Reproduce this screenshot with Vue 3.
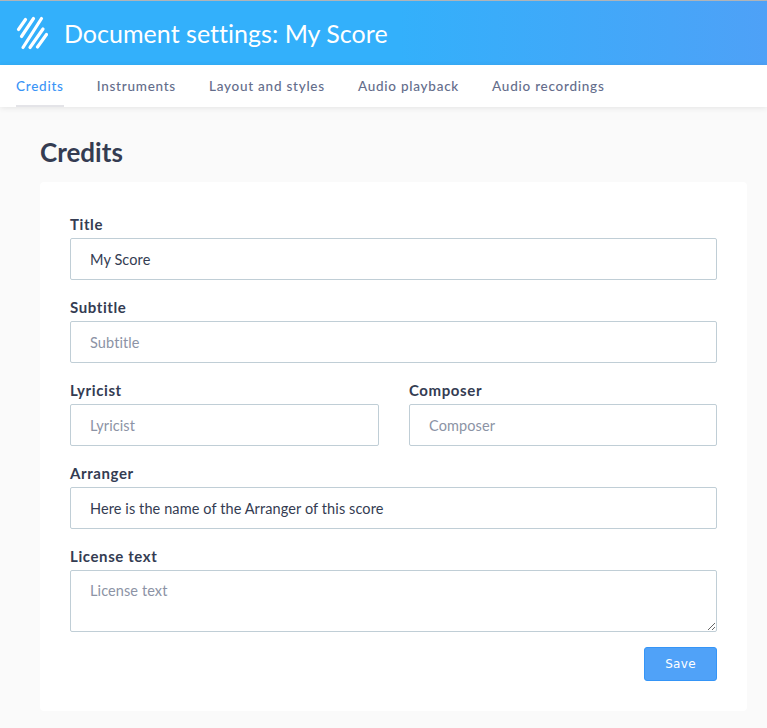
<template>
  <div class="page">
    <header class="topbar">
      <svg class="logo" viewBox="0 0 32 36" fill="none" stroke="#fff" stroke-width="3.2" stroke-linecap="round">
        <path d="M9.500 4.500 L2.500 14.500" />
        <path d="M17.500 3.500 L5.500 21.500" />
        <path d="M25.500 3.500 L7 32.500" />
        <path d="M27 14 L14 32.500" />
        <path d="M30.500 19.500 L21.500 32" />
      </svg>
      <h1 class="doc-title">Document settings: My Score</h1>
    </header>

    <nav class="tabs">
      <a v-for="t in tabs" :key="t" class="tab" :class="{ active: t === 'Credits' }">{{ t }}</a>
    </nav>

    <main class="content">
      <h2 class="section-title">Credits</h2>
      <form class="card" @submit.prevent>
        <div class="field">
          <label>Title</label>
          <input type="text" placeholder="Title" value="My Score" />
        </div>
        <div class="field">
          <label>Subtitle</label>
          <input type="text" placeholder="Subtitle" />
        </div>
        <div class="row">
          <div class="field">
            <label>Lyricist</label>
            <input type="text" placeholder="Lyricist" />
          </div>
          <div class="field">
            <label>Composer</label>
            <input type="text" placeholder="Composer" />
          </div>
        </div>
        <div class="field">
          <label>Arranger</label>
          <input type="text" placeholder="Arranger" value="Here is the name of the Arranger of this score" />
        </div>
        <div class="field">
          <label>License text</label>
          <textarea placeholder="License text"></textarea>
        </div>
        <div class="actions">
          <button type="submit" class="save">Save</button>
        </div>
      </form>
    </main>
  </div>
</template>

<script setup>
const tabs = ['Credits', 'Instruments', 'Layout and styles', 'Audio playback', 'Audio recordings'];
</script>

<style>
html, body {
  margin: 0;
  background: #fafafa;
}
</style>

<style scoped>
.page {
  font-family: "Lato", "Open Sans", sans-serif;
  color: #343c52;
  min-height: 728px;
  background: #fafafa;
}
.topbar {
  display: flex;
  align-items: center;
  box-sizing: border-box;
  height: 65px;
  padding: 0 16px;
  border-top: 1px solid #b0b4b8;
  background: linear-gradient(90deg, #33b0fb 0%, #33b0fb 52%, #4ea1f7 100%);
}
.logo {
  flex: none;
  width: 32px;
  height: 36px;
}
.doc-title {
  margin: 0 0 0 16px;
  font-size: 25px;
  font-weight: 400;
  color: #fff;
  letter-spacing: 0.03px;
}
.tabs {
  display: flex;
  gap: 33px;
  box-sizing: border-box;
  height: 42px;
  padding: 0 16px;
  background: #fff;
  box-shadow: 0 1px 6px rgba(0, 0, 0, 0.09);
  position: relative;
}
.tab {
  box-sizing: border-box;
  height: 42px;
  padding-top: 13px;
  font-size: 13.500px;
  font-weight: 500;
  letter-spacing: 0.75px;
  color: #646d8b;
}
.tab.active {
  color: #3a94f6;
  border-bottom: 2px solid #e4e4e8;
}
.content {
  padding: 30px 20px 0 40px;
}
.section-title {
  margin: 0 0 15px;
  font-size: 26px;
  line-height: 30px;
  font-weight: 700;
  color: #343c52;
}
.card {
  display: flex;
  flex-direction: column;
  gap: 19px;
  box-sizing: border-box;
  height: 529px;
  padding: 34px 30px 0;
  background: #fff;
  border-radius: 4px;
}
.row {
  display: grid;
  grid-template-columns: 309px 308px;
  justify-content: space-between;
}
.field {
  display: flex;
  flex-direction: column;
}
label {
  height: 22px;
  font-size: 15px;
  line-height: 16px;
  font-weight: 700;
  letter-spacing: 0.6px;
  color: #343c52;
}
input,
textarea {
  box-sizing: border-box;
  width: 100%;
  margin: 0;
  padding: 0 19px;
  font-family: inherit;
  font-size: 14.500px;
  letter-spacing: 0.1px;
  color: #343c52;
  background: #fff;
  border: 1px solid #c0ced6;
  border-radius: 2px;
  outline: none;
}
input {
  height: 42px;
}
textarea {
  display: block;
  height: 62px;
  padding-top: 11px;
  line-height: 18px;
  resize: vertical;
}
input::placeholder,
textarea::placeholder {
  color: #8c93a5;
  opacity: 1;
}
.actions {
  display: flex;
  justify-content: flex-end;
  margin-top: -4px;
}
.save {
  width: 73px;
  height: 34px;
  font-family: "DejaVu Sans", sans-serif;
  font-size: 12px;
  letter-spacing: 0.3px;
  color: #fff;
  background: #50a2f8;
  border: 1px solid #3595f7;
  border-radius: 3px;
}
</style>
